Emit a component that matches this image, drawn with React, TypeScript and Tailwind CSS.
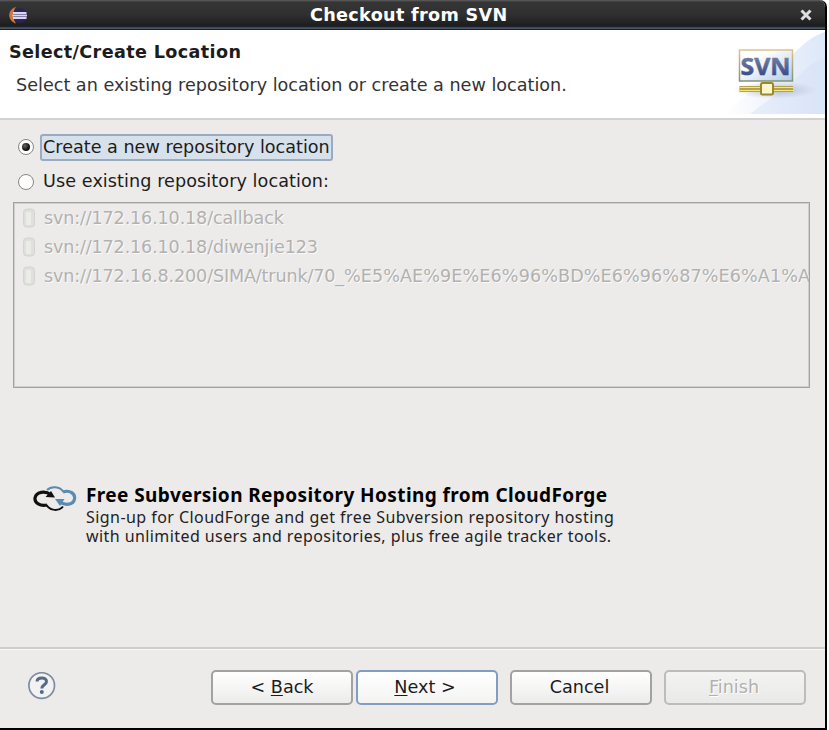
import type { ReactNode } from "react";

function EclipseIcon() {
  return (
    <svg className="ml-2 shrink-0" width="21" height="18" viewBox="0 0 21 18">
      <circle cx="12" cy="9.500" r="7.500" fill="#2b2456" />
      <path d="M8 .8C-1 4-1 14.500 8 17.500C4.500 12.500 4.500 5.500 8 .8Z" fill="#c9783f" />
      <path d="M5 7H18.500M4.500 9.500H19M5 12H18.500" stroke="#d9d6ee" strokeWidth="1.900" />
    </svg>
  );
}

function SvnBanner() {
  return (
    <svg className="h-[84px] w-[110px] shrink-0" viewBox="0 0 110 84">
      <defs>
        <linearGradient id="sky" x1="0" y1="0" x2="1" y2="0">
          <stop offset="0" stopColor="#fff" />
          <stop offset="1" stopColor="#dde7f8" />
        </linearGradient>
        <linearGradient id="panel" x1="0" y1="0" x2="1" y2="1">
          <stop offset=".3" stopColor="#fff" />
          <stop offset="1" stopColor="#b4cbe3" />
        </linearGradient>
        <linearGradient id="letters" x1="0" y1="0" x2="0" y2="1">
          <stop offset=".2" stopColor="#7a85a3" />
          <stop offset="1" stopColor="#263a80" />
        </linearGradient>
        <linearGradient id="frame" x1="0" y1="0" x2="0" y2="1">
          <stop offset="0" stopColor="#dfc38b" />
          <stop offset="1" stopColor="#7f9377" />
        </linearGradient>
        <radialGradient id="shade">
          <stop offset="0" stopColor="#8f98ad" stopOpacity=".65" />
          <stop offset="1" stopColor="#aab4cc" stopOpacity="0" />
        </radialGradient>
      </defs>
      <path d="M110 2C86 10 80 27 60 39L10 84H110Z" fill="url(#sky)" />
      <path d="M110 28C92 33 84 48 70 58L35 84H110Z" fill="#d4e1f7" opacity=".45" />
      <ellipse cx="60" cy="60" rx="42" ry="9" fill="url(#shade)" />
      <rect x="24.500" y="20" width="53" height="31" fill="url(#panel)" stroke="url(#frame)" strokeWidth="1.500" />
      <text x="25.500" y="44.500" textLength="50" lengthAdjust="spacingAndGlyphs" fill="url(#letters)" stroke="url(#letters)" strokeWidth=".5" className="font-['Open_Sans',sans-serif] text-[24px] font-bold">SVN</text>
      <path d="M24.500 59H78" stroke="#9b8b3a" strokeWidth="6" />
      <path d="M24.500 57.500H78M24.500 60.500H78" stroke="#f6e77b" strokeWidth="1.700" />
      <rect x="46" y="53" width="12" height="11.500" rx="1.500" fill="#fdf5cd" stroke="#9b882c" strokeWidth="2" />
    </svg>
  );
}

function CloudForgeLogo() {
  return (
    <svg className="mt-[4px] shrink-0" width="44" height="26" viewBox="0 0 44 26" fill="none">
      <path d="M14 4C18 0 27 0 30.500 6" stroke="#5b8bb0" strokeWidth="2" />
      <path d="M30 6C37 3.500 42.500 8 41.500 13C40.500 19 32 20 26 15.500" stroke="#5b8bb0" strokeWidth="3.200" />
      <path d="M22 13L31.500 13L27 20Z" fill="#5b8bb0" />
      <path d="M30 20.500C26 25.500 17 25 13.500 19" stroke="#101010" strokeWidth="2" />
      <path d="M14 19C7 20.500 1.500 17 2 12C3 6 12 4 18 9" stroke="#101010" strokeWidth="3.200" />
      <path d="M12.500 11L18 5L22 11.500Z" fill="#101010" />
    </svg>
  );
}

function RepoIcon() {
  return (
    <svg className="shrink-0" width="14" height="20" viewBox="0 0 14 20">
      <rect x="1.500" y="1" width="11" height="18" rx="3.500" fill="#dfdfdc" stroke="#d3d3cf" />
      <path d="M6.500 4V17" stroke="#ebebe8" strokeWidth="5" />
    </svg>
  );
}

function Radio({ checked }: { checked?: boolean }) {
  return (
    <span className="flex size-4 shrink-0 items-center justify-center rounded-full border border-[#858585] bg-white">
      {checked && <span className="size-2 rounded-full bg-[radial-gradient(circle_at_35%_35%,#666,#111_60%)]" />}
    </span>
  );
}

function Button({ className, children }: { className: string; children: ReactNode }) {
  return (
    <button className={`h-[35px] w-[142px] rounded-[5px] border-2 pb-px text-[17.600px] ${className}`}>{children}</button>
  );
}

const normal = "border-[#a2a2a2] bg-linear-to-b from-white to-[#ececeb]";
const key = "underline decoration-1 underline-offset-[2px]";
const repositories = [
  { base: "svn://172.16.10.18/callback", encoded: "" },
  { base: "svn://172.16.10.18/diwenjie123", encoded: "" },
  { base: "svn://172.16.8.200/SIMA/trunk/70_", encoded: "%E5%AE%9E%E6%96%BD%E6%96%87%E6%A1%A3" },
];

export default function App() {
  return (
    <div className="h-[730px] w-[829px] overflow-hidden bg-white font-['DejaVu_Sans',sans-serif] text-[17.600px] leading-6 text-[#1c1c1c]">
      <div className="flex h-[730px] w-[827px] flex-col overflow-hidden rounded-tr-[7px] border-r-2 border-b-2 border-black bg-[#ecebea]">
        <header className="flex h-[30px] shrink-0 items-center border-b border-[#17201e] bg-[linear-gradient(#606060_0,#363636_2px,#303030_14px,#1d1d1d_26px,#202838_27px,#586579_28px,#222c2d_30px)]">
          <EclipseIcon />
          <h1 className="ml-[281px] text-[17.600px] font-bold tracking-[0.32px] whitespace-nowrap text-white">Checkout from SVN</h1>
          <svg className="mr-[13px] ml-auto" width="12" height="12" viewBox="0 0 12 12">
            <path d="M1.500 1.500L10.500 10.500M10.500 1.500L1.500 10.500" stroke="#ddd" strokeWidth="3" />
          </svg>
        </header>
        <section className="flex h-[90px] shrink-0 justify-between border-b-2 border-[#d2d1cf] bg-white">
          <div className="pt-[10px] pl-[9px]">
            <h2 className="text-[17.600px] font-bold tracking-[0.36px] whitespace-nowrap">Select/Create Location</h2>
            <p className="mt-[9px] ml-[7px] whitespace-nowrap text-[#333]">Select an existing repository location or create a new location.</p>
          </div>
          <SvnBanner />
        </section>
        <main className="h-[527px] shrink-0 px-[13px] pt-[13px]">
          <label className="flex h-7 items-center pl-[5px]">
            <Radio checked />
            <span className="ml-[6px] h-[27px] w-[293px] rounded-[3px] border-2 border-[#9aabc0] bg-[#d7e1eb] pl-px leading-[22px] whitespace-nowrap">Create a new repository location</span>
          </label>
          <label className="mt-[7px] flex h-7 items-center pl-[5px]">
            <Radio />
            <span className="mb-[2px] ml-[9px] tracking-[0.08px] whitespace-nowrap">Use existing repository location:</span>
          </label>
          <ul className="mt-[6px] h-[186px] w-[797px] overflow-hidden border border-[#a3a2a1] text-[#b2b1af] shadow-[inset_0_0_0_1px_#d0cfce] [text-shadow:1px_1px_0_#fafafa]">
            {repositories.map(({ base, encoded }) => (
              <li key={base} className="flex h-[29px] items-center pl-[8px] whitespace-nowrap">
                <RepoIcon />
                <span className="ml-[8px] tracking-[-0.16px]">
                  {base}
                  <span className="tracking-[0.080px]">{encoded}</span>
                </span>
              </li>
            ))}
          </ul>
          <article className="mt-[94px] flex pl-[20px] font-['Noto_Sans',sans-serif]">
            <CloudForgeLogo />
            <div className="ml-[9px] flex flex-col whitespace-nowrap">
              <h3 className="text-[19px] leading-[27px] font-bold tracking-[0.41px] text-black">Free Subversion Repository Hosting from CloudForge</h3>
              <p className="-mt-px h-[19px] text-[16px] leading-[19px] tracking-[0.44px] text-[#222]">Sign-up for CloudForge and get free Subversion repository hosting</p>
              <p className="h-[19px] text-[16px] leading-[19px] tracking-[0.42px] text-[#222]">with unlimited users and repositories, plus free agile tracker tools.</p>
            </div>
          </article>
        </main>
        <footer className="flex grow border-t-2 border-[#cecdcb] pt-[21px] shadow-[inset_0_1px_0_#f8f8f7]">
          <svg className="mt-[2px] ml-[27px] shrink-0" width="30" height="28" viewBox="0 0 30 28">
            <circle cx="14.700" cy="13.500" r="12.800" fill="#f2f2f2" stroke="#7d8da2" strokeWidth="1.700" />
            <path d="M10 9.500C10.300 5 19.500 4.500 19.500 9.500C19.500 12.800 14.800 12.800 14.800 16.500" fill="none" stroke="#566985" strokeWidth="3" />
            <circle cx="14.800" cy="20" r="2" fill="#566985" />
          </svg>
          <div className="ml-[154px] flex">
            <Button className={normal}>&lt; <span className={key}>B</span>ack</Button>
            <Button className="ml-[3px] border-[#819dc1] bg-linear-to-b from-white to-[#f3f3f2] pr-[4px]"><span className={key}>N</span>ext &gt;</Button>
            <Button className={`ml-[12px] pr-[3px] ${normal}`}>Cancel</Button>
            <Button className="ml-[12px] border-[#bdbcbb] bg-linear-to-b from-[#f3f3f2] to-[#e9e9e8] pr-[2px] text-[#b2b1af] [text-shadow:1px_1px_0_#fff]"><span className={key}>F</span>inish</Button>
          </div>
        </footer>
      </div>
    </div>
  );
}
